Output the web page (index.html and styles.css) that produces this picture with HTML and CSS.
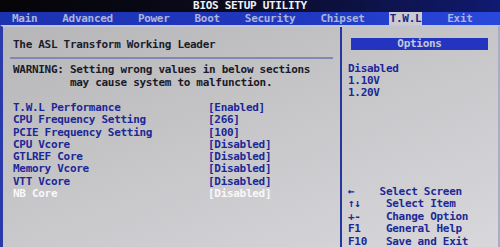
FILE: index.html
```html
<!DOCTYPE html>
<html lang="en">
<head>
  <meta charset="UTF-8" />
  <title>BIOS Setup Utility</title>
  <link rel="stylesheet" href="styles.css">
</head>
<body>
  <div class="screen">
    <div class="titlebar">BIOS SETUP UTILITY</div>

    <div class="menu">
      <span>Main</span>
      <span>Advanced</span>
      <span>Power</span>
      <span>Boot</span>
      <span>Security</span>
      <span>Chipset</span>
      <span class="active">T.W.L</span>
      <span>Exit</span>
    </div>

    <div class="frame">
      <div class="main">
        <div class="heading">The ASL Transform Working Leader</div>
        <div class="rule"></div>
        <div class="warning">WARNING: Setting wrong values in below sections
         may cause system to malfunction.</div>

        <div class="settings">
          <div class="row"><span class="label">T.W.L Performance</span><span>[Enabled]</span></div>
          <div class="row"><span class="label">CPU Frequency Setting</span><span>[266]</span></div>
          <div class="row"><span class="label">PCIE Frequency Setting</span><span>[100]</span></div>
          <div class="row"><span class="label">CPU Vcore</span><span>[Disabled]</span></div>
          <div class="row"><span class="label">GTLREF Core</span><span>[Disabled]</span></div>
          <div class="row"><span class="label">Memory Vcore</span><span>[Disabled]</span></div>
          <div class="row"><span class="label">VTT Vcore</span><span>[Disabled]</span></div>
          <div class="row selected"><span class="label">NB Core</span><span>[Disabled]</span></div>
        </div>
      </div>

      <div class="side">
        <div class="options-title">Options</div>
        <div class="options">
          <div>Disabled</div>
          <div>1.10V</div>
          <div>1.20V</div>
        </div>
        <div class="keys">←    Select Screen
↑↓    Select Item
+-    Change Option
F1    General Help
F10   Save and Exit</div>
      </div>
    </div>
  </div>
</body>
</html>
```

FILE: styles.css
```css
* { box-sizing: border-box; }

body {
  margin: 0;
  background: #000;
  font-family: "DejaVu Sans Mono", "Liberation Mono", monospace;
  font-weight: bold;
  font-size: 11px;
  letter-spacing: -0.3px;
}

.screen {
  width: 500px;
  height: 247px;
  overflow: hidden;
  display: flex;
  flex-direction: column;
}

.titlebar {
  height: 12px;
  line-height: 12px;
  text-align: center;
  color: #f2f2f6;
  background: linear-gradient(90deg, #050508 0%, #0a0a1c 45%, #101a70 100%);
}

.menu {
  height: 13px;
  line-height: 13px;
  display: flex;
  gap: 25px;
  padding-left: 12px;
  color: #aab4dc;
  background: linear-gradient(90deg, #1d32b0 0%, #2038c0 60%, #2a48dc 100%);
}

.menu .active {
  margin-left: -1px;
  padding: 0 1px;
  color: #1b2488;
  background: #cacacf;
}

.frame {
  flex: 1;
  display: flex;
  background: linear-gradient(160deg, #b6b6b9 0%, #c6c6c9 45%, #d8d8dc 100%);
  border-left: 3px solid #2a3aa8;
  border-top: 2px solid #c0c4d8;
  border-right: 2px solid #a8acc4;
}

.main {
  width: 339px;
  padding: 12px 0 0 10px;
  border-right: 2px solid #2636a0;
}

.heading {
  line-height: 12px;
  color: #1c1c2a;
}

.rule {
  height: 2px;
  margin: 6px 7px 0 -3px;
  background: #8288b4;
}

.warning {
  margin-top: 5px;
  line-height: 12.5px;
  white-space: pre;
  color: #1a1a28;
}

.settings {
  margin-top: 13px;
}

.row {
  display: flex;
  line-height: 12.3px;
  color: #1c2896;
}

.row .label {
  width: 195px;
}

.row.selected {
  color: #f8f8fa;
}

.side {
  flex: 1;
  padding: 11px 0 0 6px;
  color: #1c2896;
}

.options-title {
  height: 12px;
  line-height: 12px;
  margin: 0 10px 0 3px;
  text-align: center;
  color: #c4c8dc;
  background: #2234c0;
}

.options {
  margin-top: 13px;
  line-height: 12px;
}

.keys {
  margin-top: 86.7px;
  line-height: 12.5px;
  white-space: pre;
}
```
